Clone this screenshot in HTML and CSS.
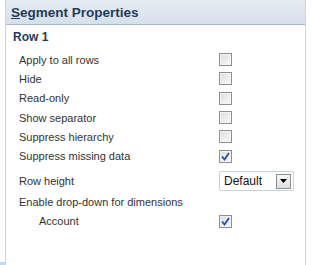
FILE: index.html
```html
<!DOCTYPE html>
<html lang="en">
  <head>
    <meta charset="UTF-8" />
    <title>Segment Properties</title>
    <link rel="stylesheet" href="styles.css">
  </head>
  <body>
    <div class="edge"><span class="edge-tab"></span></div>
    <div class="panel">
      <div class="panel-header"><u>S</u>egment Properties</div>
      <div class="panel-body">
        <div class="section-title">Row 1</div>
        <div class="prop">
          <span class="prop-label">Apply to all rows</span>
          <span class="check"></span>
        </div>
        <div class="prop">
          <span class="prop-label">Hide</span>
          <span class="check"></span>
        </div>
        <div class="prop">
          <span class="prop-label">Read-only</span>
          <span class="check"></span>
        </div>
        <div class="prop">
          <span class="prop-label">Show separator</span>
          <span class="check"></span>
        </div>
        <div class="prop">
          <span class="prop-label">Suppress hierarchy</span>
          <span class="check"></span>
        </div>
        <div class="prop">
          <span class="prop-label">Suppress missing data</span>
          <span class="check checked">
            <svg width="9" height="9" viewBox="0 0 9 9"><path d="M1 4.5 L3.5 7.5 L8 1" fill="none" stroke="#2a4fa8" stroke-width="1.8"/></svg>
          </span>
        </div>
        <div class="prop prop-select">
          <span class="prop-label">Row height</span>
          <div class="select">
            <span class="select-value">Default</span>
            <span class="select-btn">
              <svg width="7" height="4" viewBox="0 0 7 4"><path d="M0 0 H7 L3.5 4 Z" fill="#000"/></svg>
            </span>
          </div>
        </div>
        <div class="prop">
          <span class="prop-label">Enable drop-down for dimensions</span>
        </div>
        <div class="prop prop-sub">
          <span class="prop-label">Account</span>
          <span class="check checked">
            <svg width="9" height="9" viewBox="0 0 9 9"><path d="M1 4.5 L3.5 7.5 L8 1" fill="none" stroke="#2a4fa8" stroke-width="1.8"/></svg>
          </span>
        </div>
      </div>
    </div>
  </body>
</html>
```

FILE: styles.css
```css
* {
  box-sizing: border-box;
  font-family: "Liberation Sans", Arial, sans-serif;
}
html,
body {
  margin: 0;
  height: 100%;
  background-color: white;
}
body {
  display: flex;
}
.edge {
  width: 5px;
  display: flex;
  flex-direction: column;
  justify-content: flex-end;
}
.edge-tab {
  height: 3px;
  background-color: #c3d8ef;
}
.panel {
  width: 301px;
  border-left: 1px solid #d4d4d4;
  border-right: 1px solid #d4d4d4;
}
.panel-header {
  height: 25px;
  padding: 5px 0 0 5px;
  background: linear-gradient(#e6ecf3, #d6e0ea);
  border-bottom: 1px solid #a7b7c8;
  color: #1e3d5c;
  font-size: 13.5px;
  font-weight: bold;
}
.panel-header u {
  font-family: inherit;
}
.panel-body {
  padding: 5px 0 0 7px;
}
.section-title {
  color: #1e3d5c;
  font-size: 12px;
  font-weight: bold;
  height: 15px;
  margin-bottom: 5px;
}
.prop {
  display: flex;
  align-items: center;
  height: 19.3px;
  padding-left: 6px;
  color: #333;
  font-size: 11px;
}
.prop-label {
  width: 200px;
}
.prop-sub {
  padding-left: 26px;
}
.prop-sub .prop-label {
  width: 180px;
}
.prop-select {
  margin-top: 6px;
  margin-bottom: 1px;
}
.check {
  width: 13px;
  height: 13px;
  border: 1px solid #8f8f8f;
  background: linear-gradient(135deg, #dcdcdc, #fbfbfb);
  box-shadow: inset 0 0 0 1px #f4f4f4;
  display: flex;
  align-items: center;
  justify-content: center;
}
.select {
  flex: none;
  width: 75px;
  height: 20px;
  border: 1px solid #c5d2e0;
  border-radius: 2px;
  display: flex;
  align-items: center;
  justify-content: space-between;
  padding: 0 2px 0 4px;
  background-color: white;
}
.select-value {
  color: #111;
  font-size: 12px;
}
.select-btn {
  width: 15px;
  height: 15px;
  border: 1px solid #8d8d8d;
  background: linear-gradient(#f8f8f8, #dedede);
  display: flex;
  align-items: center;
  justify-content: center;
}
```
